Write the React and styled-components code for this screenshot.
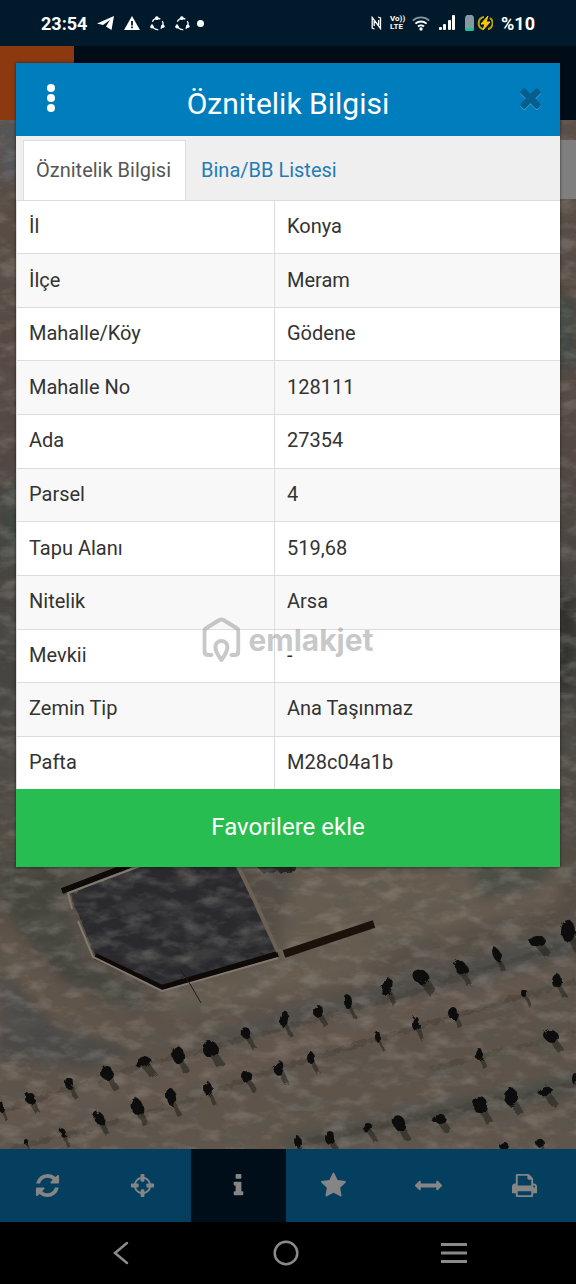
import { useState } from "react";
import styled, { createGlobalStyle } from "styled-components";

const GlobalStyle = createGlobalStyle`
  * { box-sizing: border-box; }
  body {
    margin: 0;
    background: #000;
    font-family: Roboto, "Noto Sans", sans-serif;
  }
  button { font-family: inherit; border: 0; padding: 0; cursor: pointer; }
`;

const rows = [
  ["İl", "Konya"],
  ["İlçe", "Meram"],
  ["Mahalle/Köy", "Gödene"],
  ["Mahalle No", "128111"],
  ["Ada", "27354"],
  ["Parsel", "4"],
  ["Tapu Alanı", "519,68"],
  ["Nitelik", "Arsa"],
  ["Mevkii", "-"],
  ["Zemin Tip", "Ana Taşınmaz"],
  ["Pafta", "M28c04a1b"],
];

const tabs = ["Öznitelik Bilgisi", "Bina/BB Listesi"];

const icons = {
  refresh:
    "M1639 1056q0 5-1 7-64 268-268 434.5t-478 166.5q-146 0-282.5-55t-243.5-157l-129 129q-19 19-45 19t-45-19-19-45v-448q0-26 19-45t45-19h448q26 0 45 19t19 45-19 45l-137 137q71 66 161 102t187 36q134 0 250-65t186-179q11-17 53-117 8-23 30-23h192q13 0 22.5 9.5t9.5 22.5zm25-800v448q0 26-19 45t-45 19h-448q-26 0-45-19t-19-45 19-45l138-138q-148-137-349-137-134 0-250 65t-186 179q-11 17-53 117-8 23-30 23h-199q-13 0-22.5-9.5t-9.5-22.5v-7q65-268 270-434.5t480-166.5q146 0 284 55.5t245 156.5l130-129q19-19 45-19t45 19 19 45z",
  crosshairs:
    "M1325 1024h-109q-26 0-45-19t-19-45v-128q0-26 19-45t45-19h109q-32-108-112.5-188.5t-188.5-112.5v109q0 26-19 45t-45 19h-128q-26 0-45-19t-19-45v-109q-108 32-188.5 112.5t-112.5 188.5h109q26 0 45 19t19 45v128q0 26-19 45t-45 19h-109q32 108 112.5 188.5t188.5 112.5v-109q0-26 19-45t45-19h128q26 0 45 19t19 45v109q108-32 188.5-112.5t112.5-188.5zm339-192v128q0 26-19 45t-45 19h-143q-37 161-154.5 278.5t-278.5 154.5v143q0 26-19 45t-45 19h-128q-26 0-45-19t-19-45v-143q-161-37-278.5-154.5t-154.5-278.5h-143q-26 0-45-19t-19-45v-128q0-26 19-45t45-19h143q37-161 154.5-278.5t278.5-154.5v-143q0-26 19-45t45-19h128q26 0 45 19t19 45v143q161 37 278.5 154.5t154.5 278.5h143q26 0 45 19t19 45z",
  info: "M1216 1344v128q0 26-19 45t-45 19h-512q-26 0-45-19t-19-45v-128q0-26 19-45t45-19h64v-384h-64q-26 0-45-19t-19-45v-128q0-26 19-45t45-19h384q26 0 45 19t19 45v576h64q26 0 45 19t19 45zm-128-1152v192q0 26-19 45t-45 19h-256q-26 0-45-19t-19-45v-192q0-26 19-45t45-19h256q26 0 45 19t19 45z",
  star: "M1728 647q0 22-26 48l-363 354 86 500q1 7 1 20 0 21-10.5 35.5t-30.5 14.5q-19 0-40-12l-449-236-449 236q-22 12-40 12-21 0-31.5-14.5t-10.5-35.5q0-6 2-20l86-500-364-354q-25-27-25-48 0-37 56-46l502-73 225-455q19-41 49-41t49 41l225 455 502 73q56 9 56 46z",
  arrows:
    "M1792 896q0 26-19 45l-256 256q-19 19-45 19t-45-19-19-45v-128h-1024v128q0 26-19 45t-45 19-45-19l-256-256q-19-19-19-45t19-45l256-256q19-19 45-19t45 19 19 45v128h1024v-128q0-26 19-45t45-19 45 19l256 256q19 19 19 45z",
  print:
    "M448 1536h896v-256h-896v256zm0-640h896v-384h-160q-40 0-68-28t-28-68v-160h-640v640zm1152 64q0-26-19-45t-45-19-45 19-19 45 19 45 45 19 45-19 19-45zm128 0v416q0 13-9.5 22.5t-22.5 9.5h-224v160q0 40-28 68t-68 28h-960q-40 0-68-28t-28-68v-160h-224q-13 0-22.5-9.5t-9.5-22.5v-416q0-79 56.5-135.5t135.5-56.5h64v-544q0-40 28-68t68-28h672q40 0 88 20t76 48l152 152q28 28 48 76t20 88v256h64q79 0 135.5 56.5t56.5 135.5z",
  times:
    "M1490 1322q0 40-28 68l-136 136q-28 28-68 28t-68-28l-294-294-294 294q-28 28-68 28t-68-28l-136-136q-28-28-28-68t28-68l294-294-294-294q-28-28-28-68t28-68l136-136q28-28 68-28t68 28l294 294 294-294q28-28 68-28t68 28l136 136q28 28 28 68t-28 68l-294 294 294 294q28 28 28 68z",
};

const tools = [
  { name: "refresh", label: "Yenile" },
  { name: "crosshairs", label: "Konum" },
  { name: "info", label: "Bilgi" },
  { name: "star", label: "Favoriler" },
  { name: "arrows", label: "Ölçüm" },
  { name: "print", label: "Yazdır" },
];

// x, y, rx, ry, angle
const trees = [
  [1, 1108, 3, 5, 0], [30, 1099, 5, 6, -20], [69, 1084, 4, 6, 0], [107, 1074, 6, 7, 0],
  [143, 1063, 8, 5, -25], [178, 1056, 6, 9, -10], [210, 1050, 8, 8, 30], [246, 1034, 5, 6, -30],
  [284, 1020, 4, 8, 10], [318, 1012, 5, 6, 0], [348, 1003, 4, 7, 0], [387, 988, 5, 9, 20],
  [421, 978, 9, 7, 30], [461, 969, 6, 9, -35], [497, 956, 4, 8, -25], [537, 942, 8, 5, -10],
  [568, 932, 7, 11, 0], [26, 1143, 2, 3, 0], [63, 1134, 3, 5, -20], [99, 1119, 5, 7, -30],
  [137, 1108, 6, 9, -20], [171, 1098, 5, 9, -10], [208, 1090, 4, 7, 0], [247, 1078, 5, 6, 0],
  [279, 1069, 5, 7, 20], [311, 1059, 4, 6, 0], [378, 1038, 3, 5, 0], [416, 1025, 4, 7, 0],
  [453, 1014, 5, 6, 0], [524, 994, 3, 4, 0], [557, 982, 5, 7, 0], [479, 1055, 4, 6, 0],
  [551, 1037, 7, 6, 0], [480, 1106, 7, 9, 0], [511, 1098, 7, 9, 0], [545, 1092, 7, 5, -20],
  [575, 1080, 3, 6, 0], [298, 1143, 3, 6, 0], [330, 1139, 5, 7, 0], [368, 1129, 5, 5, 0],
  [399, 1124, 6, 8, -20], [439, 1120, 7, 4, -10], [504, 1147, 5, 4, 0], [540, 1144, 4, 4, 0],
];

function Glyph({ name, size }) {
  return (
    <svg width={size} height={size} viewBox="0 0 1792 1792" fill="currentColor" aria-hidden="true">
      <path d={icons[name]} />
    </svg>
  );
}

function Cycle() {
  return (
    <svg width="15" height="15" viewBox="0 0 15 15" aria-hidden="true">
      <circle cx="7.5" cy="8" r="5.6" fill="none" stroke="#fff" strokeWidth="1.3" strokeDasharray="9.2 2.53" strokeDashoffset="4" />
      <circle cx="6.8" cy="2.2" r="1.9" fill="#fff" />
      <circle cx="2" cy="10.8" r="1.8" fill="#fff" />
      <circle cx="12.8" cy="10.2" r="1.8" fill="#fff" />
    </svg>
  );
}

function Statusbar() {
  return (
    <StatusBar>
      <StatusGroup $gap={10}>
        <StatusText>23:54</StatusText>
        <svg width="17" height="16" viewBox="0 0 17 16" aria-hidden="true">
          <path d="M0 8.500 17 1l-2.500 14-5.500-3.500L13 5 6 10z" fill="#fff" />
        </svg>
        <svg width="16" height="15" viewBox="0 0 16 15" aria-hidden="true">
          <path d="M8 0 16 14H0z" fill="#fff" />
          <path d="M7.100 5h1.800v4.500H7.100zM7.100 10.600h1.800v1.700H7.100z" fill="#001a2b" />
        </svg>
        <Cycle />
        <Cycle />
        <Dot />
      </StatusGroup>
      <StatusGroup $gap={8}>
        <svg width="11" height="14" viewBox="0 0 11 14" fill="none" stroke="#fff" aria-hidden="true">
          <path d="M3.500 13 1.200 12V1.500L9.500 12.500V2L7.200 1M3.200 10V5M7.600 9V4" strokeWidth="1.300" />
        </svg>
        <Volte>
          <span>Vo))</span>
          <span>LTE</span>
        </Volte>
        <svg width="18" height="15" viewBox="0 0 18 15" fill="none" stroke="#fff" strokeWidth="1.900" aria-hidden="true">
          <path d="M.8 4.600a12 12 0 0 1 16.400 0" stroke="#8295a1" />
          <path d="M3.400 7.600a8.500 8.500 0 0 1 11.200 0M6 10.500a5 5 0 0 1 6 0" />
          <circle cx="9" cy="13" r="1.700" fill="#fff" stroke="none" />
        </svg>
        <svg width="18" height="16" viewBox="0 0 18 16" fill="#fff" aria-hidden="true">
          <rect x="1" y="12" width="3" height="3" rx="1" />
          <rect x="5" y="9" width="3" height="6" rx="1" />
          <rect x="10" y="5" width="3" height="10" rx="1" />
          <rect x="14" y="0" width="3" height="15" rx="1" />
        </svg>
        <svg width="29" height="18" viewBox="0 0 29 18" aria-hidden="true">
          <path d="M3 1h5q2 1 2 3v11q0 2-2 2H3q-2 0-2-2V4q0-2 2-3z" fill="#8398a2" />
          <path d="M1 14h9v1q0 2-2 2H3q-2 0-2-2z" fill="#1fbf95" />
          <path d="M20 3a6.300 6.300 0 0 0-1 12.200M24 15.200a6.300 6.300 0 0 0 2-11.200" fill="none" stroke="#b9a116" strokeWidth="2" />
          <path d="M24 2 17 10h4l-2 6 7-8h-4l2-6z" fill="#ffc90a" stroke="#ffc90a" />
        </svg>
        <StatusText>%10</StatusText>
      </StatusGroup>
    </StatusBar>
  );
}

function Satellite() {
  return (
    <MapImage viewBox="0 120 576 1030" preserveAspectRatio="xMidYMax slice" aria-hidden="true">
      <defs>
        <linearGradient id="ground" x1="0" y1="0" x2="0" y2="1">
          <stop offset="0" stopColor="#5a4e47" />
          <stop offset=".3" stopColor="#554842" />
          <stop offset=".5" stopColor="#444340" />
          <stop offset=".72" stopColor="#524c44" />
          <stop offset=".85" stopColor="#5c5249" />
          <stop offset="1" stopColor="#5f554b" />
        </linearGradient>
        <filter id="grain" x="0" y="0" width="100%" height="100%">
          <feTurbulence type="fractalNoise" baseFrequency=".03 .06" numOctaves="5" seed="8" />
          <feColorMatrix values="0 0 0 0 0.1  0 0 0 0 0.1  0 0 0 0 0.09  3 0 0 0 -1.300" />
        </filter>
        <filter id="dust" x="0" y="0" width="100%" height="100%">
          <feTurbulence type="fractalNoise" baseFrequency=".04 .08" numOctaves="4" seed="21" />
          <feColorMatrix values="0 0 0 0 0.52  0 0 0 0 0.47  0 0 0 0 0.41  3 0 0 0 -1.400" />
        </filter>
        <filter id="rough" x="-5%" y="-5%" width="110%" height="110%">
          <feTurbulence type="fractalNoise" baseFrequency=".15" numOctaves="2" seed="3" />
          <feDisplacementMap in="SourceGraphic" scale="6" />
        </filter>
        <filter id="soft" x="-20%" y="-20%" width="140%" height="140%">
          <feGaussianBlur stdDeviation="6" />
        </filter>
      </defs>
      <rect y="120" width="576" height="1030" fill="url(#ground)" />
      <g filter="url(#soft)">
        <path d="M0 120h20v60H0z" fill="#55565a" />
        <path d="M0 490 20 480V560L0 570z" fill="#40443f" />
        <path d="M556 300h20v70h-20z" fill="#414742" />
        <path d="M556 590h20v100h-20z" fill="#30302d" />
        <path d="M0 860h80L60 900 80 960 160 1000 130 1010 60 980 0 900z" fill="#45443c" />
        <path d="M0 915Q40 985 150 1040L110 1060Q30 1020 0 970z" fill="#61554a" />
        <path d="M0 970 60 1030 140 1050 90 1070 0 1060z" fill="#4c4a46" />
        <path d="M290 870h270v35L400 945l-60 40-100 20-70 10-10-24 120-35z" fill="#665b50" />
        <path d="M200 1040 576 925v40L200 1075z" fill="#504e48" />
        <path d="M0 1110 280 1030 576 960v22L280 1065 0 1140z" fill="#63574d" />
        <path d="M280 1140 576 1075v20L290 1150z" fill="#4a4b44" />
        <path d="M470 867h90l-20 20-60 15z" fill="#4c4e45" />
      </g>
      <g fill="none" stroke="#3b3732" filter="url(#rough)">
        <path d="M0 1113 110 1076 250 1038 390 1000 576 942" strokeWidth="5" opacity=".4" />
        <path d="M10 1150 140 1117 290 1066 450 1018 576 982" strokeWidth="5" opacity=".4" />
        <path d="M300 1144 450 1112 576 1085" strokeWidth="6" opacity=".4" />
        <path d="M430 1070 576 1034" strokeWidth="5" opacity=".3" />
      </g>
      <g filter="url(#rough)">
        <path d="M70 895 140 866h95L278 953 162 988 95 956z" fill="#2b2b2d" />
        <path d="M256 867h40v5l-32 3z" fill="#1a1a1a" />
      </g>
      <rect y="120" width="576" height="1030" filter="url(#grain)" opacity=".4" />
      <rect y="120" width="576" height="1030" filter="url(#dust)" opacity=".22" />
      <path d="M62 892 130 866M95 957 162 989 278 955" fill="none" stroke="#0d0a08" strokeWidth="6" />
      <path d="M140 867 68 894 72 910M78 922 93 958 162 992 278 959" fill="none" stroke="#82786f" strokeWidth="2" />
      <path d="M238 867 253 898 278 953" fill="none" stroke="#6b6054" strokeWidth="4" />
      <path d="M284 955 374 925" stroke="#1d110c" strokeWidth="8" />
      <path d="M180 970 190 985 201 1004" fill="none" stroke="#1e1b18" strokeWidth="1" />
      <g filter="url(#rough)">
        {trees.map(([x, y, rx, ry, angle]) => (
          <g key={`${x}-${y}`}>
            <path d={`M${x} ${y}l${rx + 3} ${ry + 9}`} stroke="#2a2722" strokeWidth={rx} opacity=".6" />
            <ellipse cx={x} cy={y} rx={rx} ry={ry} transform={`rotate(${angle} ${x} ${y})`} fill="#110e0b" />
          </g>
        ))}
      </g>
    </MapImage>
  );
}

export default function App() {
  const [activeTab, setActiveTab] = useState(0);
  const [activeTool, setActiveTool] = useState("info");

  return (
    <Screen>
      <GlobalStyle />
      <Statusbar />
      <AppHeader>
        <MenuTile />
      </AppHeader>
      <MapArea>
        <Satellite />
        <SearchPanel />
      </MapArea>

      <Toolbar>
        {tools.map((t) => (
          <ToolButton
            key={t.name}
            aria-label={t.label}
            $active={activeTool === t.name}
            onClick={() => setActiveTool(t.name)}
          >
            <Glyph name={t.name} size={27} />
          </ToolButton>
        ))}
      </Toolbar>

      <SystemNav>
        <NavButton aria-label="Geri">
          <svg width="18" height="24" viewBox="0 0 18 24" fill="none" stroke="currentColor" strokeWidth="2.500" strokeLinecap="round">
            <path d="M15 2 3 12l12 10" />
          </svg>
        </NavButton>
        <NavButton aria-label="Ana ekran">
          <svg width="26" height="26" viewBox="0 0 26 26" fill="none" stroke="currentColor" strokeWidth="2.500">
            <circle cx="13" cy="13" r="11.300" />
          </svg>
        </NavButton>
        <NavButton aria-label="Son uygulamalar">
          <svg width="26" height="22" viewBox="0 0 26 22" stroke="currentColor" strokeWidth="3">
            <path d="M0 2.500h26M0 11h26M0 19.500h26" />
          </svg>
        </NavButton>
      </SystemNav>

      <Dialog role="dialog" aria-labelledby="dialog-title">
        <DialogHeader>
          <HeaderButton aria-label="Menü">
            <svg width="10" height="30" viewBox="0 0 10 30" fill="#fff">
              <circle cx="5" cy="5" r="4" />
              <circle cx="5" cy="15" r="4" />
              <circle cx="5" cy="25" r="4" />
            </svg>
          </HeaderButton>
          <DialogTitle id="dialog-title">Öznitelik Bilgisi</DialogTitle>
          <CloseButton aria-label="Kapat">
            <Glyph name="times" size={31} />
          </CloseButton>
        </DialogHeader>
        <Tabs role="tablist">
          {tabs.map((tab, i) => (
            <Tab key={tab} role="tab" aria-selected={activeTab === i} $active={activeTab === i} onClick={() => setActiveTab(i)}>
              {tab}
            </Tab>
          ))}
        </Tabs>
        <Table>
          <tbody>
            {rows.map(([name, value]) => (
              <tr key={name}>
                <th scope="row">{name}</th>
                <td>{value}</td>
              </tr>
            ))}
          </tbody>
        </Table>
        <FavoriteButton>Favorilere ekle</FavoriteButton>
      </Dialog>

      <Watermark>
        <svg width="38" height="46" viewBox="0 0 38 46" fill="none" stroke="currentColor" strokeWidth="4" strokeLinecap="round" strokeLinejoin="round" aria-hidden="true">
          <path d="M9 38H6q-4 0-4-4V15q0-3 2-4L17 3q2-1 4 0l13 8q2 1 2 4v19q0 4-4 4h-3" />
          <path d="M19 43q-6-8-6-13a6 6 0 0 1 12 0q0 5-6 13z" strokeWidth="4" />
        </svg>
        <span>emlakjet</span>
      </Watermark>
    </Screen>
  );
}

const Screen = styled.div`
  position: relative;
  display: flex;
  flex-direction: column;
  min-height: 100vh;
`;

const StatusBar = styled.div`
  display: flex;
  align-items: center;
  justify-content: space-between;
  height: 46px;
  padding: 0 41px;
  background: #001a2b;
  color: #fff;
`;

const StatusGroup = styled.div`
  display: flex;
  align-items: center;
  gap: ${({ $gap }) => $gap}px;
`;

const StatusText = styled.span`
  font-size: 18px;
  font-weight: 700;
`;

const Dot = styled.span`
  width: 7px;
  height: 7px;
  margin-left: -3px;
  border-radius: 50%;
  background: #fff;
`;

const Volte = styled.span`
  display: flex;
  flex-direction: column;
  width: 14px;
  font-size: 8px;
  font-weight: 700;
  line-height: 8px;
`;

const AppHeader = styled.header`
  height: 74px;
  background: #000c17;
`;

const MenuTile = styled.div`
  width: 74px;
  height: 74px;
  background: #8d3910;
`;

const MapArea = styled.main`
  position: relative;
  flex: 1;
  min-height: 760px;
  padding-top: 20px;
  overflow: hidden;
`;

const MapImage = styled.svg`
  position: absolute;
  inset: 0;
  width: 100%;
  height: 100%;
`;

const SearchPanel = styled.div`
  position: relative;
  height: 59px;
  margin-left: 50%;
  background: #7f7f7f;
`;

const Toolbar = styled.nav`
  display: grid;
  grid-template-columns: repeat(6, 1fr);
  height: 73px;
  padding-right: 4px;
  background: #053f60;
`;

const ToolButton = styled.button`
  display: flex;
  align-items: center;
  justify-content: center;
  background: ${({ $active }) => ($active ? "#000e19" : "transparent")};
  color: #858585;
`;

const SystemNav = styled.nav`
  display: flex;
  align-items: center;
  justify-content: space-between;
  height: 62px;
  padding: 0 109px 0 112px;
  background: #000;
`;

const NavButton = styled.button`
  display: flex;
  background: transparent;
  color: #8a8a8a;
`;

const Dialog = styled.section`
  position: absolute;
  top: 63px;
  left: 16px;
  right: 16px;
  background: #fff;
  box-shadow: 0 0 3px rgba(0, 0, 0, 0.6);
`;

const DialogHeader = styled.header`
  display: grid;
  grid-template-columns: 70px 1fr 70px;
  align-items: center;
  height: 73px;
  background: #007dbd;
`;

const HeaderButton = styled.button`
  display: flex;
  justify-content: center;
  padding-bottom: 4px;
  background: transparent;
`;

const CloseButton = styled(HeaderButton)`
  padding-left: 10px;
  color: #055e8e;
  filter: drop-shadow(0 1px 0 #4a9cc8);
`;

const DialogTitle = styled.h1`
  margin: 8px 0 0;
  color: #fff;
  font-size: 30px;
  font-weight: 400;
  line-height: 36px;
  text-align: center;
`;

const Tabs = styled.div`
  display: flex;
  height: 65px;
  padding: 4px 7px 0;
  background: #efefef;
  border-bottom: 1px solid #ddd;
`;

const Tab = styled.button`
  padding: 0 14px 2px 12px;
  font-size: 20px;
  background: ${({ $active }) => ($active ? "#fff" : "transparent")};
  color: ${({ $active }) => ($active ? "#555" : "#257bb4")};
  border: 1px solid ${({ $active }) => ($active ? "#ddd" : "transparent")};
  border-bottom: 0;

  & + & { padding-left: 14px; }
`;

const Table = styled.table`
  width: 100%;
  height: 588px;
  border-collapse: collapse;
  border-left: 1px solid #ddd;
  color: #333;
  font-size: 20px;
  line-height: 28px;

  tr:nth-child(even) { background: #f8f8f8; }
  tr + tr { border-top: 1px solid #ddd; }
  th, td {
    padding: 0 12px 2px;
    font-weight: 400;
    text-align: left;
  }
  th { width: 258px; border-right: 1px solid #ddd; }
`;

const FavoriteButton = styled.button`
  display: block;
  width: 100%;
  height: 78px;
  padding-bottom: 2px;
  background: #27bd50;
  color: #fff;
  font-size: 24px;
`;

/* sits over the centre of the whole screen */
const Watermark = styled.div`
  position: absolute;
  top: 50%;
  left: 50%;
  display: flex;
  align-items: center;
  gap: 8px;
  padding-bottom: 4px;
  transform: translate(-50%, -50%);
  color: rgba(145, 145, 145, 0.5);
  font-family: Inter, sans-serif;
  font-size: 30px;
  font-weight: 700;
  line-height: 36px;
  pointer-events: none;
`;
